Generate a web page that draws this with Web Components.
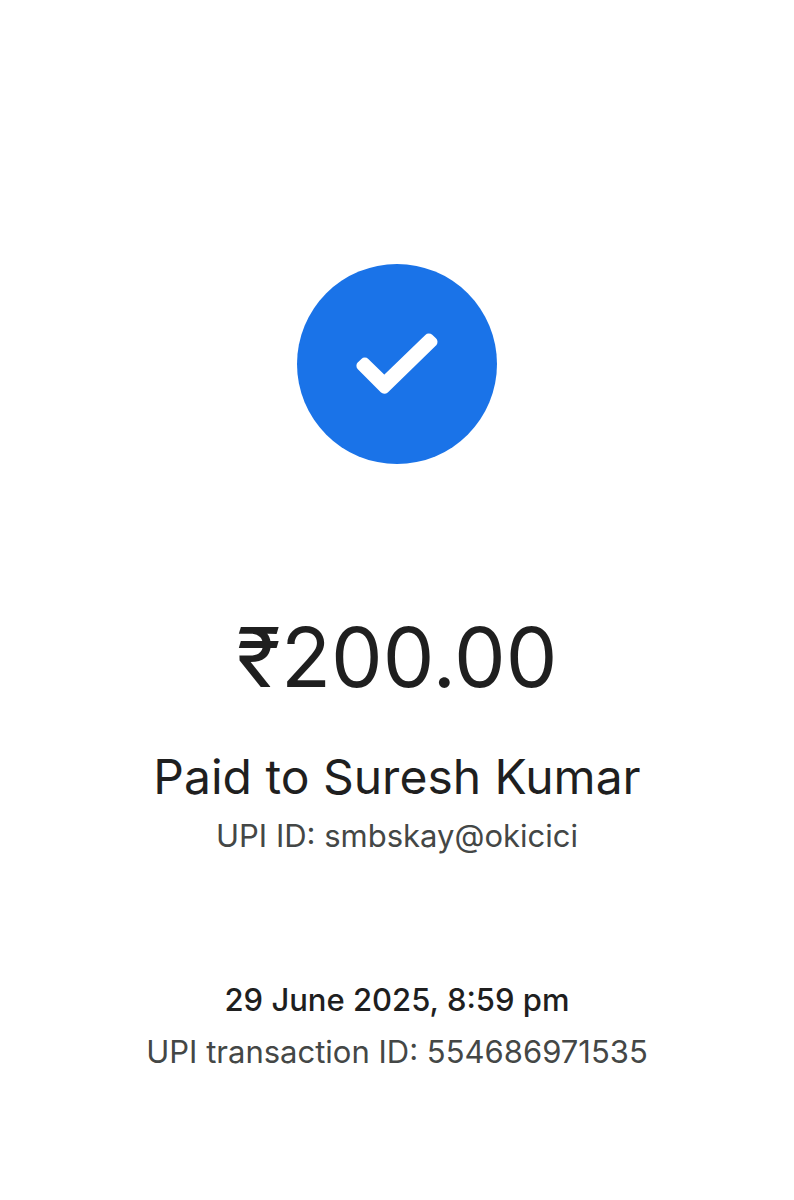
<!DOCTYPE html>
<html lang="en">
<head>
<meta charset="utf-8">
<meta name="viewport" content="width=device-width, initial-scale=1">
<title>Payment receipt</title>
<style>
body{
  margin: 0;
  background-color: #fff;
  color: #1f1f1f;
  font-family: Inter, "Noto Sans", sans-serif;
}
</style>
</head>
<body>

<payment-receipt>
  <success-badge slot="badge"></success-badge>
  <payment-amount>₹200.00</payment-amount>
  <detail-block size="large">
    <span slot="title">Paid to Suresh Kumar</span>
    UPI ID: smbskay@okicici
  </detail-block>
  <detail-block>
    <span slot="title">29 June 2025, 8:59 pm</span>
    UPI transaction ID: 554686971535
  </detail-block>
</payment-receipt>

<script>
const template = document.createElement('template');

// RECEIPT
template.innerHTML = `
<style>
:host{
  display: flex;
  flex-direction: column;
  align-items: center;
  box-sizing: border-box;
  min-height: 100vh;
  padding: 264px 16px 64px;
  text-align: center;
}
main{
  display: flex;
  flex-direction: column;
  align-items: center;
  margin-top: 142px;
}
</style>
<slot name="badge"></slot>
<main><slot></slot></main>
`;
class paymentReceipt extends HTMLElement {
  constructor() {
    super();
    this.attachShadow({ mode: 'open' });
    this.shadowRoot.appendChild(template.content.cloneNode(true));
  }
}
window.customElements.define('payment-receipt', paymentReceipt);

// SUCCESS BADGE
const badgeTemplate = document.createElement('template');
badgeTemplate.innerHTML = `
<style>
:host{
  display: block;
  width: 200px;
  height: 200px;
}
svg{
  display: block;
  width: 100%;
  height: 100%;
}
</style>
<svg viewBox="0 0 200 200" role="img" aria-label="Payment successful">
  <circle cx="100" cy="100" r="100" fill="#1a73e8"/>
  <path d="M64.4 101.8 L67.8 98.6 L87.3 117.6 L131.8 74.5 L135.5 78 L87.3 124.8 Z" fill="#fff" stroke="#fff" stroke-width="10" stroke-linejoin="round"/>
</svg>
`;
class successBadge extends HTMLElement {
  constructor() {
    super();
    this.attachShadow({ mode: 'open' });
    this.shadowRoot.appendChild(badgeTemplate.content.cloneNode(true));
  }
}
window.customElements.define('success-badge', successBadge);

// AMOUNT
const amountTemplate = document.createElement('template');
amountTemplate.innerHTML = `
<style>
:host{
  display: block;
}
h1{
  margin: 0;
  font-size: 82px;
  line-height: 104px;
  font-weight: 400;
}
</style>
<h1><slot></slot></h1>
`;
class paymentAmount extends HTMLElement {
  constructor() {
    super();
    this.attachShadow({ mode: 'open' });
    this.shadowRoot.appendChild(amountTemplate.content.cloneNode(true));
  }
}
window.customElements.define('payment-amount', paymentAmount);

// TITLE WITH A LINE UNDER IT
const detailTemplate = document.createElement('template');
detailTemplate.innerHTML = `
<style>
:host{
  display: block;
  margin-top: 112px;
}
h2{
  margin: 0;
  font-size: 31px;
  line-height: 52px;
  font-weight: 500;
}
p{
  margin: 0;
  color: #444746;
  font-size: 31px;
  line-height: 52px;
}
:host([size="large"]){
  margin-top: 34px;
}
:host([size="large"]) h2{
  font-size: 48px;
  line-height: 66px;
  font-weight: 400;
}
</style>
<h2><slot name="title"></slot></h2>
<p><slot></slot></p>
`;
class detailBlock extends HTMLElement {
  constructor() {
    super();
    this.attachShadow({ mode: 'open' });
    this.shadowRoot.appendChild(detailTemplate.content.cloneNode(true));
  }
}
window.customElements.define('detail-block', detailBlock);
</script>
</body>
</html>
